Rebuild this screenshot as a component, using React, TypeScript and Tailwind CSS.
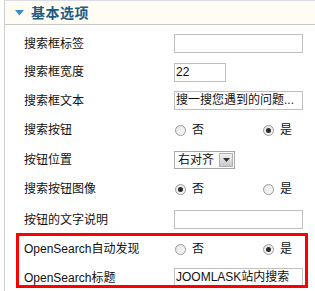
import React from "react";

const font = "font-['Liberation_Sans','Noto_Sans_CJK_SC',sans-serif]";

function Radio({ checked }: { checked?: boolean }) {
  return (
    <span className="relative inline-flex h-[11px] w-[11px] items-center justify-center rounded-full border border-[#9a9a9a] bg-gradient-to-br from-[#e4e4e4] to-[#fafafa]">
      {checked && <span className="h-[5px] w-[5px] rounded-full bg-[#2a2a2a]" />}
    </span>
  );
}

function RadioPair({ yes }: { yes: boolean }) {
  return (
    <div className="flex items-center">
      <div className="flex w-[89px] items-center gap-[6px] pl-[1px]">
        <Radio checked={!yes} />
        <span>否</span>
      </div>
      <div className="flex items-center gap-[6px]">
        <Radio checked={yes} />
        <span>是</span>
      </div>
    </div>
  );
}

function TextBox({ value, w = "w-[129px]", red }: { value?: string; w?: string; red?: boolean }) {
  return (
    <div
      className={`${w} h-[19px] overflow-hidden whitespace-nowrap border border-[#bfbfbf] bg-white pl-[1px] text-[12px] leading-[17px] ${
        red ? "text-[#2a0000]" : "text-[#111]"
      }`}
    >
      {value}
    </div>
  );
}

function Select() {
  return (
    <div className="flex h-[18px] w-[61px] items-center border border-[#a8a8a8] bg-white">
      <span className="flex-1 pl-[3px] text-[12px] leading-[16px]">右对齐</span>
      <span className="mr-[1px] flex h-[14px] w-[14px] items-center justify-center border border-[#b0b0b0] bg-gradient-to-b from-[#f2f2f2] to-[#c8c8c8]">
        <svg width="7" height="4" viewBox="0 0 7 4">
          <path d="M0 0H7L3.5 4Z" fill="#333" />
        </svg>
      </span>
    </div>
  );
}

const rows: { label: React.ReactNode; h: string; control: React.ReactNode }[] = [
  { label: "搜索框标签", h: "h-[29px]", control: <TextBox /> },
  { label: "搜索框宽度", h: "h-[28px]", control: <TextBox value="22" w="w-[52px]" red /> },
  { label: "搜索框文本", h: "h-[29px]", control: <TextBox value="搜一搜您遇到的问题..." /> },
  { label: "搜索按钮", h: "h-[30px]", control: <RadioPair yes /> },
  { label: "按钮位置", h: "h-[29px]", control: <Select /> },
  { label: "搜索按钮图像", h: "h-[30px]", control: <RadioPair yes={false} /> },
  { label: "按钮的文字说明", h: "h-[31px]", control: <TextBox /> },
  { label: "OpenSearch自动发现", h: "h-[28px]", control: <RadioPair yes /> },
  { label: "OpenSearch标题", h: "h-[29px]", control: <TextBox value="JOOMLASK站内搜索" /> },
];

export default function App() {
  return (
    <div className={`relative h-[291px] w-[315px] overflow-hidden bg-white text-[12px] text-[#111] ${font}`}>
      <div className="ml-[4px] h-full border-l border-[#cfcfcf]">
        <div className="flex h-[25px] items-center border-t border-b border-t-[#dcdce6] border-b-[#c8c8c8] bg-[#fffdf3] pl-[10px]">
          <svg width="9" height="6" viewBox="0 0 9 6" className="mr-[7px]">
            <path d="M0 0H9L4.5 5.5Z" fill="#3a8ed0" />
          </svg>
          <span className="text-[14px] font-bold leading-none tracking-[0.5px] text-[#1d5b86]">基本选项</span>
        </div>
        <div className="pt-[4px] pl-[19px]">
          {rows.map((r, i) => (
            <div key={i} className={`grid grid-cols-[150px_1fr] items-center ${r.h}`}>
              <span className="whitespace-nowrap">{r.label}</span>
              {r.control}
            </div>
          ))}
        </div>
      </div>
      <div className="pointer-events-none absolute left-[16px] top-[233px] h-[55px] w-[292px] border-[3px] border-[#ff0000]" />
    </div>
  );
}
